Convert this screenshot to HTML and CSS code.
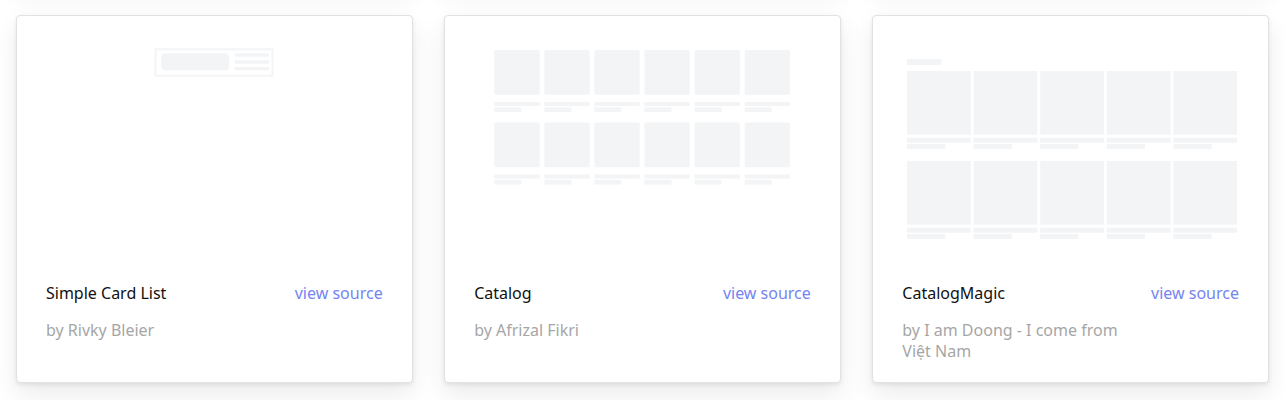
FILE: index.html
```html
<!DOCTYPE html>
<html lang="en">
<head>
<meta charset="utf-8">
<title>Templates</title>
<link rel="stylesheet" href="styles.css">
</head>
<body>
<div class="grid grid-prev" aria-hidden="true">
  <div class="card card-prev"></div>
  <div class="card card-prev"></div>
  <div class="card card-prev"></div>
</div>
<div class="grid">
  <article class="card">
    <svg class="preview" viewBox="0 0 394 250" xmlns="http://www.w3.org/2000/svg">
      <rect x="138.5" y="33.3" width="117" height="26.4" fill="none" stroke="#f3f4f6" stroke-width="2"/>
      <rect x="144.2" y="37.3" width="68" height="17" rx="4" fill="#f3f4f6"/>
      <rect x="217.9" y="37.3" width="34" height="3.4" fill="#f3f4f6"/>
      <rect x="217.9" y="44.3" width="34" height="3.4" fill="#f3f4f6"/>
      <rect x="217.9" y="51" width="34" height="3.3" fill="#f3f4f6"/>
    </svg>
    <div class="info">
      <div class="title-row">
        <span class="title">Simple Card List</span>
        <a class="source" href="#">view source</a>
      </div>
      <p class="author">by Rivky Bleier</p>
    </div>
  </article>
  <article class="card">
    <svg class="preview" viewBox="0 0 394 250" xmlns="http://www.w3.org/2000/svg">
      <g fill="#f3f4f6" id="c2row">
        <rect x="49.3" y="34" width="45.3" height="44.7" rx="1.5"/>
        <rect x="49.3" y="86" width="45.3" height="4"/>
        <rect x="49.3" y="91.3" width="27" height="4.7"/>
        <rect x="99.4" y="34" width="45.3" height="44.7" rx="1.5"/>
        <rect x="99.4" y="86" width="45.3" height="4"/>
        <rect x="99.4" y="91.3" width="27" height="4.7"/>
        <rect x="149.4" y="34" width="45.3" height="44.7" rx="1.5"/>
        <rect x="149.4" y="86" width="45.3" height="4"/>
        <rect x="149.4" y="91.3" width="27" height="4.7"/>
        <rect x="199.5" y="34" width="45.3" height="44.7" rx="1.5"/>
        <rect x="199.5" y="86" width="45.3" height="4"/>
        <rect x="199.5" y="91.3" width="27" height="4.7"/>
        <rect x="249.6" y="34" width="45.3" height="44.7" rx="1.5"/>
        <rect x="249.6" y="86" width="45.3" height="4"/>
        <rect x="249.6" y="91.3" width="27" height="4.7"/>
        <rect x="299.7" y="34" width="45.3" height="44.7" rx="1.5"/>
        <rect x="299.7" y="86" width="45.3" height="4"/>
        <rect x="299.7" y="91.3" width="27" height="4.7"/>
      </g>
      <use href="#c2row" y="72.5"/>
    </svg>
    <div class="info">
      <div class="title-row">
        <span class="title">Catalog</span>
        <a class="source" href="#">view source</a>
      </div>
      <p class="author">by Afrizal Fikri</p>
    </div>
  </article>
  <article class="card">
    <svg class="preview" viewBox="0 0 394 250" xmlns="http://www.w3.org/2000/svg">
      <rect x="33" y="43" width="34.3" height="6" fill="#f3f4f6"/>
      <g fill="#f3f4f6" id="c3row">
        <rect x="33" y="55" width="63.7" height="63.7"/>
        <rect x="33" y="121.7" width="63.7" height="5"/>
        <rect x="33" y="128" width="38.3" height="5"/>
        <rect x="99.6" y="55" width="63.7" height="63.7"/>
        <rect x="99.6" y="121.7" width="63.7" height="5"/>
        <rect x="99.6" y="128" width="38.3" height="5"/>
        <rect x="166.2" y="55" width="63.7" height="63.7"/>
        <rect x="166.2" y="121.7" width="63.7" height="5"/>
        <rect x="166.2" y="128" width="38.3" height="5"/>
        <rect x="232.8" y="55" width="63.7" height="63.7"/>
        <rect x="232.8" y="121.7" width="63.7" height="5"/>
        <rect x="232.8" y="128" width="38.3" height="5"/>
        <rect x="299.4" y="55" width="63.7" height="63.7"/>
        <rect x="299.4" y="121.7" width="63.7" height="5"/>
        <rect x="299.4" y="128" width="38.3" height="5"/>
      </g>
      <use href="#c3row" y="90"/>
    </svg>
    <div class="info">
      <div class="title-row">
        <span class="title">CatalogMagic</span>
        <a class="source" href="#">view source</a>
      </div>
      <p class="author">by I am Doong - I come from Việt Nam</p>
    </div>
  </article>
</div>
</body>
</html>
```
FILE: styles.css
```css
* { box-sizing: border-box; }

html {
  background: #ffffff;
  overflow: hidden;
}

body {
  margin: 0;
  padding: 0 0 17px 0;
  font-family: "Noto Sans", "Open Sans", "Liberation Sans", sans-serif;
  color: #111111;
}

.grid {
  display: grid;
  grid-template-columns: repeat(3, 1fr);
  column-gap: 31.5px;
  padding: 0 15px 0 16px;
  align-items: stretch;
}

.grid-prev {
  margin-top: -385px;
  margin-bottom: 32px;
}

.card {
  background: #ffffff;
  border: 1px solid #e2e2e2;
  border-radius: 4px;
  box-shadow: 0 2px 4px rgba(0, 0, 0, 0.08), 0 12px 26px rgba(0, 0, 0, 0.08);
  display: flex;
  flex-direction: column;
}

.card-prev {
  height: 368px;
}

.preview {
  display: block;
  align-self: center;
  width: 394px;
  height: 250px;
}

.info {
  padding: 17px 29px 20px 29px;
}

.title-row {
  display: flex;
  justify-content: space-between;
  align-items: baseline;
  font-size: 16px;
  line-height: 21px;
}

.title {
  color: #111111;
}

.source {
  color: #7584f2;
  text-decoration: none;
}

.author {
  margin: 16px 0 0 0;
  font-size: 16px;
  line-height: 21px;
  color: #a6a6a6;
  max-width: 232px;
}
```
